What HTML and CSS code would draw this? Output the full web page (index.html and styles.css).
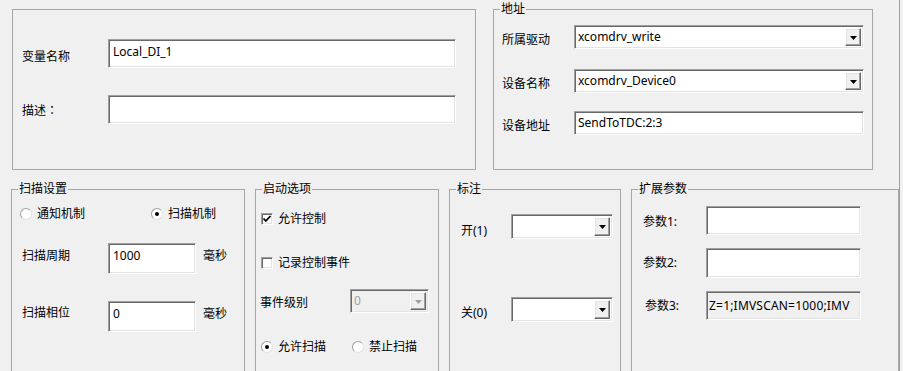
FILE: index.html
```html
<!DOCTYPE html>
<html>
<head>
<meta charset="utf-8">
<link rel="stylesheet" href="styles.css">
</head>
<body>
<div class="window">
  <div class="top">
    <div class="group g-a">
      <div class="r r-a1">
        <span class="lbl la1">变量名称</span>
        <div class="edit multi w-a">Local_DI_1</div>
      </div>
      <div class="r r-a2">
        <span class="lbl la2">描述<span class="colon">：</span></span>
        <div class="edit multi w-a"></div>
      </div>
    </div>
    <div class="group g-b">
      <span class="title">地址</span>
      <div class="r rb r-b1">
        <span class="lbl lb">所属驱动</span>
        <div class="combo w-b"><span class="txt">xcomdrv_write</span><span class="btn"><svg width="7" height="4" viewBox="0 0 7 4"><polygon points="0,0 7,0 3.5,4" fill="#000"/></svg></span></div>
      </div>
      <div class="r rb r-b2">
        <span class="lbl lb">设备名称</span>
        <div class="combo w-b"><span class="txt">xcomdrv_Device0</span><span class="btn"><svg width="7" height="4" viewBox="0 0 7 4"><polygon points="0,0 7,0 3.5,4" fill="#000"/></svg></span></div>
      </div>
      <div class="r rb r-b3">
        <span class="lbl lb">设备地址</span>
        <div class="edit single w-b h24">SendToTDC:2:3</div>
      </div>
    </div>
  </div>

  <div class="bottom">
    <div class="group g-c">
      <span class="title">扫描设置</span>
      <div class="r rc-radio">
        <label class="opt opt-c1"><span class="radio"></span><span>通知机制</span></label>
        <label class="opt"><span class="radio on"></span><span>扫描机制</span></label>
      </div>
      <div class="r rc-1">
        <span class="lbl lc">扫描周期</span>
        <div class="edit multi w-c">1000</div>
        <span class="unit">毫秒</span>
      </div>
      <div class="r rc-2">
        <span class="lbl lc lc2">扫描相位</span>
        <div class="edit multi w-c">0</div>
        <span class="unit">毫秒</span>
      </div>
    </div>

    <div class="group g-d">
      <span class="title">启动选项</span>
      <div class="r rd-1">
        <label class="opt"><span class="check"><svg width="10" height="10" viewBox="0 0 10 10"><polyline points="1.5,4.5 3.8,7 8.5,2" fill="none" stroke="#000" stroke-width="1.8"/></svg></span><span>允许控制</span></label>
      </div>
      <div class="r rd-2">
        <label class="opt"><span class="check"></span><span>记录控制事件</span></label>
      </div>
      <div class="r rd-3">
        <span class="lbl ld">事件级别</span>
        <div class="combo disabled w-d"><span class="txt">0</span><span class="btn"><svg width="7" height="4" viewBox="0 0 7 4"><polygon points="0,0 7,0 3.5,4" fill="#a0a0a0"/></svg></span></div>
      </div>
      <div class="r rd-4">
        <label class="opt opt-d1"><span class="radio on"></span><span>允许扫描</span></label>
        <label class="opt"><span class="radio"></span><span>禁止扫描</span></label>
      </div>
    </div>

    <div class="group g-e">
      <span class="title">标注</span>
      <div class="r re-1">
        <span class="lbl le le1">开(1)</span>
        <div class="combo w-e"><span class="txt"></span><span class="btn"><svg width="7" height="4" viewBox="0 0 7 4"><polygon points="0,0 7,0 3.5,4" fill="#000"/></svg></span></div>
      </div>
      <div class="r re-2">
        <span class="lbl le le2">关(0)</span>
        <div class="combo w-e"><span class="txt"></span><span class="btn"><svg width="7" height="4" viewBox="0 0 7 4"><polygon points="0,0 7,0 3.5,4" fill="#000"/></svg></span></div>
      </div>
    </div>

    <div class="group g-f">
      <span class="title">扩展参数</span>
      <div class="r rf-1">
        <span class="lbl lf lf1">参数1:</span>
        <div class="edit w-f h29"></div>
      </div>
      <div class="r rf-2">
        <span class="lbl lf">参数2:</span>
        <div class="edit w-f h30"></div>
      </div>
      <div class="r rf-3">
        <span class="lbl lf lf3">参数3:</span>
        <div class="edit single readonly w-f h29">Z=1;IMVSCAN=1000;IMV</div>
      </div>
    </div>
  </div>
</div>
</body>
</html>
```

FILE: styles.css
```css
* { box-sizing: border-box; }

body {
  margin: 0;
  background: #f0f0f0;
  font-family: "Noto Sans", "Noto Sans CJK SC", sans-serif;
  font-size: 12px;
  line-height: 14px;
  color: #000;
}

.window {
  width: 900px;
  height: 371px;
  overflow: hidden;
  background: #f0f0f0;
  border-right: 1px solid #a0a0a0;
}

.top {
  display: flex;
  gap: 17px;
  padding: 9px 0 0 12px;
}

.bottom {
  display: flex;
  gap: 10px;
  padding-left: 11px;
  margin-top: 19px;
}

.group {
  position: relative;
  border: 1px solid #a6a6a6;
  flex: none;
}

.title {
  position: absolute;
  top: -8px;
  left: 6px;
  padding: 0 1px;
  background: #f0f0f0;
  line-height: 14px;
  white-space: nowrap;
}

.g-a { width: 464px; height: 161px; padding: 29px 0 0 9px; }
.g-b { width: 380px; height: 161px; padding: 15px 0 0 8px; }
.g-c { width: 234px; height: 200px; }
.g-d { width: 184px; height: 200px; }
.g-e { width: 172px; height: 200px; }
.g-f { width: 268px; height: 200px; }

.r {
  display: flex;
  align-items: flex-start;
}

.lbl { flex: none; white-space: nowrap; }
.colon { font-family: "Noto Sans CJK TC", "Noto Sans CJK SC", sans-serif; }

/* group A */
.r-a2 { margin-top: 27px; }
.la1 { width: 86px; margin-top: 11px; }
.la2 { width: 86px; margin-top: 8px; }
.w-a { width: 348px; height: 29px; }

/* group B */
.rb { align-items: center; }
.lb { width: 72px; padding-top: 6px; }
.r-b2 { margin-top: 20px; }
.r-b3 { margin-top: 18px; }
.w-b { width: 290px; height: 24px; }

/* edits */
.edit {
  background: #fff;
  border: 1px solid;
  border-color: #a0a0a0 #fff #fff #a0a0a0;
  box-shadow: inset 1px 1px 0 #696969, inset -1px -1px 0 #e3e3e3;
  white-space: nowrap;
  overflow: hidden;
  flex: none;
}
.edit.multi { padding: 4px 4px; line-height: 15px; }
.edit.single { display: flex; align-items: center; padding: 0 3px; }
.edit.readonly { background: #f0f0f0; padding-left: 2px; letter-spacing: 0.2px; }
.h24 { height: 24px; }
.h29 { height: 29px; }
.h30 { height: 30px; }

/* combo */
.combo {
  display: flex;
  align-items: stretch;
  flex: none;
  background: #fff;
  border: 1px solid;
  border-color: #a0a0a0 #fff #fff #a0a0a0;
  box-shadow: inset 1px 1px 0 #696969, inset -1px -1px 0 #e3e3e3;
  padding: 2px 2px 2px 3px;
}
.combo .txt {
  flex: 1;
  display: flex;
  align-items: center;
  white-space: nowrap;
  overflow: hidden;
}
.combo .btn {
  width: 16px;
  flex: none;
  display: flex;
  align-items: center;
  justify-content: center;
  background: #f0f0f0;
  border: 1px solid;
  border-color: #fff #696969 #696969 #fff;
  box-shadow: inset -1px -1px 0 #a0a0a0, inset 1px 1px 0 #e3e3e3;
}
.combo .btn svg { display: block; margin-top: 1px; }
.combo.disabled { background: #f0f0f0; }
.combo.disabled .txt { color: #a0a0a0; }

/* radio / check */
.opt {
  display: flex;
  align-items: center;
  gap: 5px;
  white-space: nowrap;
  flex: none;
}
.radio {
  width: 12px;
  height: 12px;
  flex: none;
  border-radius: 50%;
  background: #fff;
  border: 1px solid;
  border-color: #a0a0a0 #e3e3e3 #e3e3e3 #a0a0a0;
  display: flex;
  align-items: center;
  justify-content: center;
}
.radio.on::after {
  content: "";
  width: 4px;
  height: 4px;
  border-radius: 50%;
  background: #000;
}
.check {
  width: 12px;
  height: 12px;
  flex: none;
  background: #fff;
  border: 1px solid;
  border-color: #a0a0a0 #fff #fff #a0a0a0;
  box-shadow: inset 1px 1px 0 #696969, inset -1px -1px 0 #e3e3e3;
  display: flex;
  align-items: center;
  justify-content: center;
}
.check svg { display: block; }

/* group C */
.rc-radio { margin-top: 17px; padding-left: 8px; align-items: center; height: 14px; }
.opt-c1 { width: 131px; }
.rc-1 { margin-top: 22px; padding-left: 10px; }
.rc-2 { margin-top: 27px; padding-left: 10px; }
.lc { width: 86px; margin-top: 6px; }
.lc2 { margin-top: 5px; }
.w-c { width: 88px; height: 31px; }
.unit { margin-left: 7px; margin-top: 6px; white-space: nowrap; }

/* group D */
.rd-1 { margin-top: 22px; padding-left: 5px; height: 14px; align-items: center; }
.rd-2 { margin-top: 30px; padding-left: 5px; height: 14px; align-items: center; }
.rd-3 { margin-top: 19px; padding-left: 4px; }
.ld { width: 90px; margin-top: 7px; }
.w-d { width: 79px; height: 24px; }
.rd-4 { margin-top: 27px; padding-left: 5px; height: 14px; align-items: center; }
.opt-d1 { width: 91px; }

/* group E */
.re-1 { margin-top: 24px; padding-left: 11px; }
.re-2 { margin-top: 58px; padding-left: 11px; }
.le { width: 50px; }
.le1 { margin-top: 10px; }
.le2 { margin-top: 9px; }
.w-e { width: 102px; height: 25px; }

/* group F */
.rf-1 { margin-top: 16px; padding-left: 11px; }
.rf-2 { margin-top: 13px; padding-left: 11px; }
.rf-3 { margin-top: 13px; padding-left: 13px; }
.lf { width: 63px; margin-top: 8px; }
.lf1 { margin-top: 9px; }
.lf3 { width: 61px; }
.w-f { width: 155px; }
```
